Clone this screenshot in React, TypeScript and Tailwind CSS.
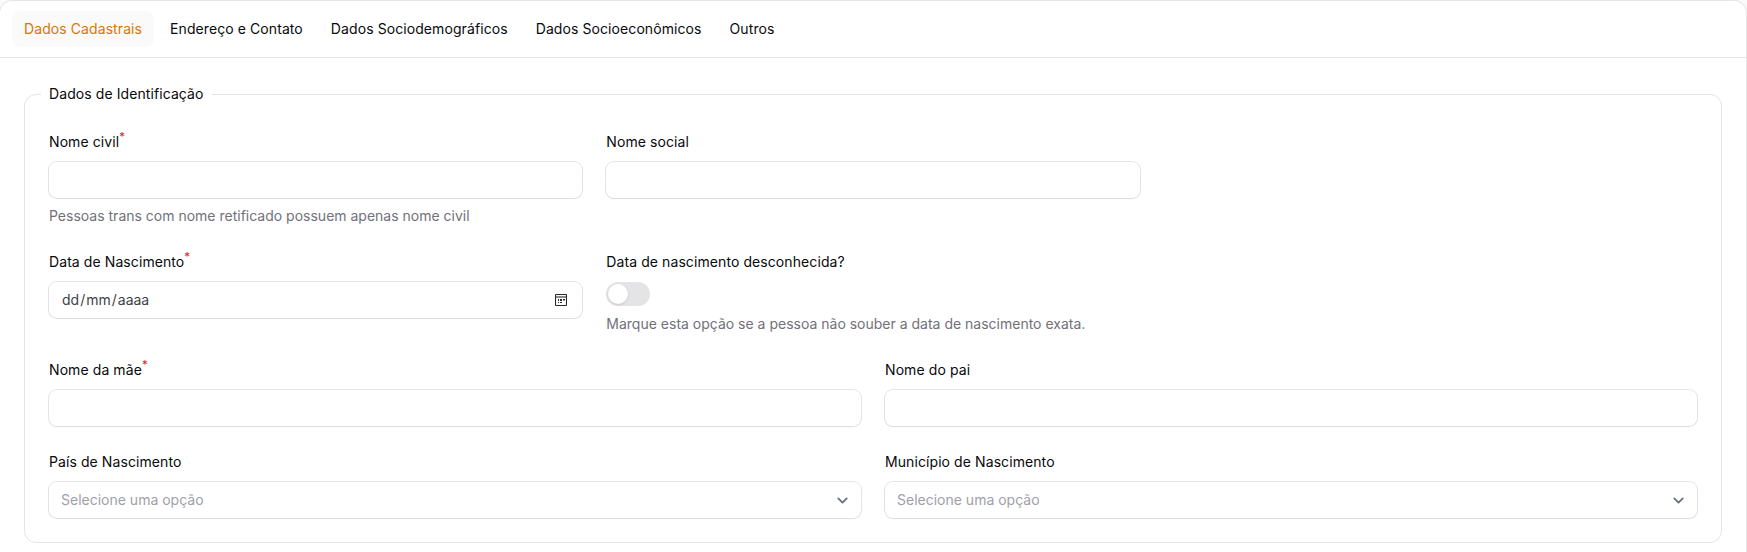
import type { ReactNode } from 'react';

const tabs = ['Dados Cadastrais', 'Endereço e Contato', 'Dados Sociodemográficos', 'Dados Socioeconômicos', 'Outros'];

function Field({ label, required, hint, children }: { label: string; required?: boolean; hint?: string; children: ReactNode }) {
  return (
    <div className="flex min-w-0 flex-col gap-2">
      <div className="flex h-6 items-center text-sm leading-6 tracking-[0.085px] text-[#09090b]">
        <span>
          {label}
          {required && <sup className="text-[11.5px] leading-none text-[#dc2626]">*</sup>}
        </span>
      </div>
      {children}
      {hint && <p className="h-5 text-sm leading-5 text-[#71717a]">{hint}</p>}
    </div>
  );
}

const boxClass = 'flex h-9 w-full items-center rounded-lg bg-white text-sm leading-6 shadow-xs ring-1 ring-[#09090b]/10';

function TextInput({ label }: { label: string }) {
  return (
    <div className={boxClass}>
      <input aria-label={label} className="h-full w-full bg-transparent px-3 text-sm outline-none" />
    </div>
  );
}

function DateInput() {
  return (
    <div className={boxClass + ' justify-between pr-[15px] pl-3 text-[#3f3f46]'}>
      <div className="flex">
        <span className="px-px">dd</span>
        <span>/</span>
        <span className="px-px">mm</span>
        <span>/</span>
        <span className="px-px">aaaa</span>
      </div>
      <svg width="12" height="12" viewBox="0 0 12 12" fill="none">
        <rect x="0.5" y="0.5" width="11" height="11" rx="0.8" stroke="#27272a" strokeWidth="1.1" />
        <path d="M1 2h10v2H1z" fill="#8a8a8e" />
        <path d="M3 5h1v2H3zM5 5h2v2H5zM8 5h2v1.6H8zM3 8h1v1H3zM5 8h2v1H5z" fill="#27272a" />
      </svg>
    </div>
  );
}

function SelectInput() {
  return (
    <button type="button" className={boxClass + ' justify-between pr-2 pl-3 text-[#9f9fa9]'}>
      <span>Selecione uma opção</span>
      <svg width="21" height="21" viewBox="0 0 20 20" fill="none">
        <path d="m6 8 4 4 4-4" stroke="#6b7280" strokeWidth="1.8" strokeLinecap="round" strokeLinejoin="round" />
      </svg>
    </button>
  );
}

export default function App() {
  return (
    <div className="h-[552px] overflow-hidden bg-[#fafafa] pt-px pr-px font-['Inter',sans-serif]">
      <div className="h-[600px] rounded-xl bg-white ring-1 ring-[#09090b]/8">
        <nav className="flex h-[57px] gap-1 border-b border-[#e4e4e7] px-3 py-2.5">
          {tabs.map((tab, i) => (
            <button
              key={tab}
              type="button"
              className={
                i === 0
                  ? 'h-9 rounded-lg bg-[#fafafa] px-3 text-sm leading-5 tracking-[0.085px] text-[#d97706]'
                  : 'h-9 rounded-lg px-3 text-sm leading-5 tracking-[0.085px] text-[#09090b]'
              }
            >
              {tab}
            </button>
          ))}
        </nav>
        <div className="p-6">
          <fieldset className="flex min-w-0 flex-col gap-6 rounded-xl border border-[#e4e4e7] p-6">
            <legend className="-ml-2 px-2 text-sm leading-6 tracking-[0.085px] text-[#09090b]">Dados de Identificação</legend>
            <div className="grid grid-cols-3 gap-6">
              <Field label="Nome civil" required hint="Pessoas trans com nome retificado possuem apenas nome civil">
                <TextInput label="Nome civil" />
              </Field>
              <Field label="Nome social">
                <TextInput label="Nome social" />
              </Field>
            </div>
            <div className="grid grid-cols-3 gap-6">
              <Field label="Data de Nascimento" required>
                <DateInput />
              </Field>
              <Field label="Data de nascimento desconhecida?" hint="Marque esta opção se a pessoa não souber a data de nascimento exata.">
                <button
                  type="button"
                  role="switch"
                  aria-checked="false"
                  aria-label="Data de nascimento desconhecida?"
                  className="flex h-6 w-11 rounded-full border-2 border-transparent bg-[#e4e4e7]"
                >
                  <span className="size-5 rounded-full bg-white shadow-sm" />
                </button>
              </Field>
            </div>
            <div className="grid grid-cols-2 gap-6">
              <Field label="Nome da mãe" required>
                <TextInput label="Nome da mãe" />
              </Field>
              <Field label="Nome do pai">
                <TextInput label="Nome do pai" />
              </Field>
              <Field label="País de Nascimento">
                <SelectInput />
              </Field>
              <Field label="Município de Nascimento">
                <SelectInput />
              </Field>
            </div>
          </fieldset>
        </div>
      </div>
    </div>
  );
}
